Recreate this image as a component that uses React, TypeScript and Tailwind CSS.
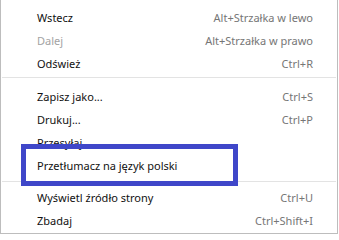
type Item = { label: string; shortcut?: string; disabled?: boolean }

const groupOne: Item[] = [
  { label: 'Wstecz', shortcut: 'Alt+Strzałka w lewo' },
  { label: 'Dalej', shortcut: 'Alt+Strzałka w prawo', disabled: true },
  { label: 'Odśwież', shortcut: 'Ctrl+R' },
]

const groupTwo: Item[] = [
  { label: 'Zapisz jako...', shortcut: 'Ctrl+S' },
  { label: 'Drukuj...', shortcut: 'Ctrl+P' },
  { label: 'Przesyłaj' },
  { label: 'Przetłumacz na język polski' },
]

const groupThree: Item[] = [
  { label: 'Wyświetl źródło strony', shortcut: 'Ctrl+U' },
  { label: 'Zbadaj', shortcut: 'Ctrl+Shift+I' },
]

const MenuRow = ({ item }: { item: Item }) => (
  <div className="flex h-[23px] items-center justify-between pl-[36px] pr-[24px] leading-[23px]">
    <span className={item.disabled ? 'text-[#a3a3a3]' : 'text-[#111]'}>{item.label}</span>
    {item.shortcut && <span className="text-[#767676]">{item.shortcut}</span>}
  </div>
)

const App = () => {
  return (
    <div className="relative h-[235px] w-[339px] bg-white font-['Noto_Sans',sans-serif] text-[11px]">
      {/* ------------------ Context Menu ------------------ */}
      <div className="h-[234px] w-[338px] border-x border-b border-[#bdbdbd] bg-white pt-[6px]">
        {groupOne.map((item) => (
          <MenuRow key={item.label} item={item} />
        ))}

        <div className="mx-[1px] mb-[7px] mt-[2px] h-px bg-[#e3e3e3]" />

        {groupTwo.map((item) => (
          <MenuRow key={item.label} item={item} />
        ))}

        <div className="mx-[1px] mb-[4px] mt-[4px] h-px bg-[#e3e3e3]" />

        {groupThree.map((item) => (
          <MenuRow key={item.label} item={item} />
        ))}
      </div>

      {/* ------------------ Highlight Frame ------------------ */}
      <div className="absolute left-[21px] top-[144px] h-[42px] w-[217px] border-[5px] border-[#3f47c9]" />
    </div>
  )
}

export default App
